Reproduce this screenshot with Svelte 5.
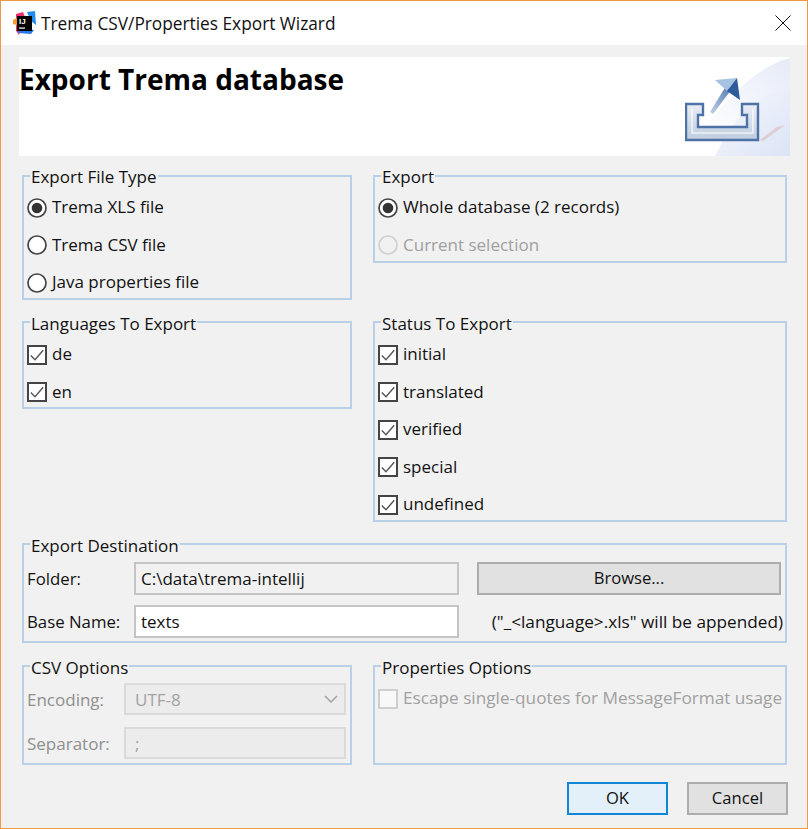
<script>
  const fileTypes = [
    { label: 'Trema XLS file', checked: true },
    { label: 'Trema CSV file' },
    { label: 'Java properties file' }
  ];
  const languages = ['de', 'en'];
  const statuses = ['initial', 'translated', 'verified', 'special', 'undefined'];
</script>

{#snippet radio(label, checked, disabled)}
  <div class="opt" class:disabled>
    <svg class="ctl" viewBox="0 0 20 20" width="20" height="20">
      <circle cx="10" cy="10" r="9" fill={disabled ? '#f1f1f1' : '#fff'} stroke={disabled ? '#cfcfcf' : '#444'} stroke-width="1.7" />
      {#if checked}<circle cx="10" cy="10" r="5.3" fill="#333" />{/if}
    </svg>
    <span>{label}</span>
  </div>
{/snippet}

{#snippet check(label, checked, disabled)}
  <div class="opt" class:disabled>
    <svg class="ctl" viewBox="0 0 20 20" width="20" height="20">
      <rect x="1" y="1" width="18" height="18" fill={disabled ? '#f8f8f8' : '#fff'} stroke={disabled ? '#cfcfcf' : '#444'} stroke-width="2" />
      {#if checked}<path d="M3.8 10.5 L8 14.8 L16.2 5.2" fill="none" stroke="#555" stroke-width="1.4" />{/if}
    </svg>
    <span>{label}</span>
  </div>
{/snippet}

<div class="window">
  <header class="titlebar">
    <svg class="appicon" viewBox="0 0 24 24" width="24" height="24">
      <path d="M3 3 L10 1 L12 6 L6 24 L3 20 Z" fill="#f0326e" />
      <path d="M14 1 L22 0 L23 14 L18 10 Z" fill="#1f8cf0" />
      <path d="M0 9 L4 7 L4 14 L0 13 Z" fill="#f99a2a" />
      <path d="M5 22 L18 23 L21 19 L6 17 Z" fill="#2a78e8" />
      <rect x="4" y="5" width="15" height="15" fill="#000" />
      <text x="6" y="12.5" class="ij">IJ</text>
      <rect x="6" y="16.5" width="6" height="1.2" fill="#fff" />
    </svg>
    <span class="title">Trema CSV/Properties Export Wizard</span>
    <svg class="close" viewBox="0 0 16 16" width="16" height="16">
      <path d="M0.5 0.5 L15.5 15.5 M15.5 0.5 L0.5 15.5" stroke="#111" stroke-width="1" fill="none" />
    </svg>
  </header>

  <main class="body">
    <section class="banner">
      <h1>Export Trema database</h1>
      <svg class="art" viewBox="0 0 105 99" width="105" height="99">
        <defs>
          <linearGradient id="sky" x1="0" y1="1" x2="1" y2="0">
            <stop offset="0.2" stop-color="#ffffff" />
            <stop offset="1" stop-color="#e6ebf8" />
          </linearGradient>
          <linearGradient id="sky2" x1="0" y1="0" x2="1" y2="1">
            <stop offset="0" stop-color="#f8fafd" />
            <stop offset="1" stop-color="#dbe3f5" />
          </linearGradient>
          <linearGradient id="tray" x1="0" y1="0" x2="0" y2="1">
            <stop offset="0" stop-color="#e9edf5" />
            <stop offset="1" stop-color="#bfcde0" />
          </linearGradient>
          <linearGradient id="arrow" x1="0" y1="1" x2="1" y2="0">
            <stop offset="0" stop-color="#c3d3e6" />
            <stop offset="1" stop-color="#4f78b0" />
          </linearGradient>
        </defs>
        <path d="M105 1 C75 8 45 35 -2 99 L105 99 Z" fill="url(#sky)" />
        <path d="M105 30 C80 36 55 48 30 99 L105 99 Z" fill="url(#sky2)" />
        <path d="M75 83 L92 70 L100 68 L78 84 Z" fill="#dcc4c8" opacity="0.8" />
        <path d="M25 55 L28 57 L46 33 L41 29 Z" fill="url(#arrow)" />
        <path d="M30 23 L52 21 L42 34 Z" fill="#a6c3e2" />
        <path d="M42 34 L52 21 L55 43 Z" fill="#2f5b9c" />
        <path d="M1 47 H18 V58 H13 V70 H62 V58 H57 V47 H73 V83 H1 Z" fill="url(#tray)" stroke="#4f72a6" stroke-width="2.4" />
        <path d="M7 52 V76 H68 V52" fill="none" stroke="#fff" stroke-width="1.6" opacity="0.7" />
      </svg>
    </section>

    <div class="columns">
      <fieldset class="h-file top">
        <legend>Export File Type</legend>
        {#each fileTypes as t}{@render radio(t.label, t.checked, false)}{/each}
      </fieldset>
      <fieldset class="h-export top">
        <legend>Export</legend>
        {@render radio('Whole database (2 records)', true, false)}
        {@render radio('Current selection', false, true)}
      </fieldset>
      <fieldset class="h-lang">
        <legend>Languages To Export</legend>
        {#each languages as l}{@render check(l, true, false)}{/each}
      </fieldset>
      <fieldset class="h-status">
        <legend>Status To Export</legend>
        {#each statuses as s}{@render check(s, true, false)}{/each}
      </fieldset>
    </div>

    <fieldset class="dest">
      <legend>Export Destination</legend>
      <div class="dest-grid">
        <span class="label">Folder:</span>
        <div class="input ro">C:\data\trema-intellij</div>
        <button class="btn browse">Browse...</button>
        <span class="label">Base Name:</span>
        <div class="input">texts</div>
        <span class="hint">("_&lt;language&gt;.xls" will be appended)</span>
      </div>
    </fieldset>

    <div class="columns options">
      <fieldset class="csv">
        <legend>CSV Options</legend>
        <div class="csv-grid">
          <span class="muted">Encoding:</span>
          <div class="input off select">
            <span>UTF-8</span>
            <svg viewBox="0 0 14 8" width="14" height="8"><path d="M1 1 L7 7 L13 1" fill="none" stroke="#a2a2a2" stroke-width="1.5" /></svg>
          </div>
          <span class="muted">Separator:</span>
          <div class="input off">;</div>
        </div>
      </fieldset>
      <fieldset class="props">
        <legend>Properties Options</legend>
        {@render check('Escape single-quotes for MessageFormat usage', false, true)}
      </fieldset>
    </div>

    <footer class="actions">
      <button class="btn ok">OK</button>
      <button class="btn">Cancel</button>
    </footer>
  </main>
</div>

<style>
  :global(body) {
    margin: 0;
    background: #f1f1f1;
  }
  .window {
    width: 808px;
    height: 829px;
    box-sizing: border-box;
    border: 1px solid #ee9a44;
    background: #f1f1f1;
    font-family: "Open Sans", "Noto Sans", sans-serif;
    font-size: 17px;
    color: #111;
    overflow: hidden;
  }
  .titlebar {
    height: 44px;
    background: #fff;
    display: flex;
    align-items: center;
    padding: 0 16px 0 12px;
    gap: 4px;
  }
  .appicon {
    flex: none;
  }
  .close {
    margin-top: -1px;
  }
  .ij {
    font: 700 8px "Liberation Sans", sans-serif;
    fill: #fff;
  }
  .title {
    flex: 1;
    font-size: 17.3px;
  }
  .body {
    padding: 12px 17px 0 18px;
  }
  .banner {
    height: 99px;
    background: #fff;
    display: flex;
    justify-content: space-between;
    margin-bottom: 9px;
  }
  h1 {
    margin: 0;
    font-size: 28px;
    font-weight: 700;
    line-height: 45px;
    color: #000;
  }
  .art {
    display: block;
  }
  .columns {
    display: grid;
    grid-template-columns: 330px 414px;
    column-gap: 21px;
    row-gap: 10px;
    margin-left: 3px;
    align-items: start;
  }
  fieldset {
    margin: 0;
    min-width: 0;
    box-sizing: border-box;
    border: 2px solid #b9d0e8;
    padding: 2px 0 0 3px;
  }
  legend {
    padding: 4px 1px 0;
    margin-left: 3px;
    line-height: 20px;
    color: #111;
  }
  .top legend {
    padding-top: 2px;
  }
  .h-file {
    height: 135px;
  }
  .h-export {
    height: 98px;
  }
  .h-lang {
    height: 99px;
  }
  .h-status {
    height: 212px;
  }
  .opt {
    display: flex;
    align-items: center;
    gap: 5px;
    height: 37.5px;
    white-space: nowrap;
  }
  .opt span {
    margin-bottom: 2px;
  }
  .opt .ctl {
    flex: none;
  }
  .opt.disabled {
    color: #a0a0a0;
  }
  .props .opt {
    font-size: 17.2px;
  }
  .dest {
    margin: 10px 3px 11px 3px;
    height: 111px;
    padding-top: 6px;
  }
  .dest-grid {
    display: grid;
    grid-template-columns: 107px 325px 322px;
    grid-template-rows: 33px 33px;
    row-gap: 10px;
    align-items: center;
  }
  .label {
    font-size: 16.8px;
  }
  .input {
    height: 33px;
    box-sizing: border-box;
    border: 2px solid #c4c4c4;
    background: #fff;
    display: flex;
    align-items: center;
    padding-left: 5px;
  }
  .input.ro {
    background: #f1f1f1;
  }
  .input.off {
    background: #ececec;
    border-color: #dadada;
    color: #a2a2a2;
    padding-left: 9px;
  }
  .select {
    justify-content: space-between;
    padding-right: 6px;
  }
  .btn {
    font: inherit;
    font-size: 16.6px;
    color: #111;
    width: 101px;
    height: 33px;
    border: 2px solid #adadad;
    background: #e1e1e1;
    padding: 0 0 2px;
  }
  .browse {
    width: 304px;
    margin-left: 18px;
  }
  .hint {
    white-space: nowrap;
    text-align: right;
    margin-right: -2px;
    font-size: 17.2px;
  }
  .csv,
  .props {
    height: 111px;
  }
  .csv {
    padding-top: 5px;
  }
  .csv-grid {
    display: grid;
    grid-template-columns: 97px 222px;
    grid-template-rows: 32px 32px;
    row-gap: 12px;
    align-items: center;
  }
  .muted {
    color: #8f8f8f;
  }
  .csv-grid .input {
    height: 32px;
  }
  .actions {
    display: flex;
    justify-content: flex-end;
    gap: 19px;
    margin-top: 17px;
    padding-right: 2px;
  }
  .ok {
    background: #e3f0fa;
    border-color: #0f86d8;
  }
</style>
